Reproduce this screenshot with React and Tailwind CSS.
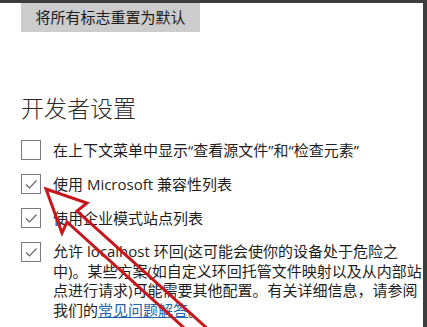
import React from 'react';

const font = { fontFamily: '"Open Sans", "Noto Sans CJK SC", sans-serif' };

function Box({ checked }) {
    return (
        <div className="w-[20px] h-[20px] shrink-0 border-[1.5px] border-[#7a7a7a] bg-white flex items-center justify-center">
            {checked && (
                <svg width="16" height="16" viewBox="0 0 16 16">
                    <polyline points="3,8.5 6.5,12 13.5,4.5" fill="none" stroke="#666666" strokeWidth="1.2" />
                </svg>
            )}
        </div>
    );
}

function Row({ checked, children }) {
    return (
        <div className="flex items-center gap-[12px] h-[20px]">
            <Box checked={checked} />
            <span className="text-[15px] text-[#1e1e1e] whitespace-nowrap">{children}</span>
        </div>
    );
}

export default function App() {
    return (
        <div
            className="relative w-[427px] h-[327px] overflow-hidden bg-white border-t-[3px] border-r-[4px] border-[#3d3d3d]"
            style={font}
        >
            <div className="pl-[21px] flex flex-col">
                <div className="w-[179px] h-[29px] bg-[#cccccc] flex items-center justify-center text-[15px] text-[#1a1a1a]">
                    将所有标志重置为默认
                </div>

                <div className="mt-[60px] h-[32px] leading-[32px] text-[23px] font-light text-[#2a2a2a]">
                    开发者设置
                </div>

                <div className="mt-[16px] flex flex-col gap-[14px]">
                    <Row checked={false}>在上下文菜单中显示“查看源文件”和“检查元素”</Row>
                    <Row checked>使用 Microsoft 兼容性列表</Row>
                    <Row checked>使用企业模式站点列表</Row>
                    <div className="flex items-start gap-[12px]">
                        <Box checked />
                        <div className="text-[15px] leading-[19.5px] text-[#1e1e1e] whitespace-nowrap">
                            <div>允许 localhost 环回(这可能会使你的设备处于危险之</div>
                            <div>中)。某些方案(如自定义环回托管文件映射以及从内部站</div>
                            <div>点进行请求)可能需要其他配置。有关详细信息，请参阅</div>
                            <div>
                                我们的<span className="text-[#2163a8] underline">常见问题解答</span>。
                            </div>
                        </div>
                    </div>
                </div>
            </div>

            {/* red annotation arrow */}
            <svg className="absolute left-0 top-[-3px] pointer-events-none" width="427" height="330" viewBox="0 0 427 330">
                <polygon
                    points="46,189 87,203 77,211 220,340 203,345 67,222 62,233"
                    fill="none"
                    stroke="#c8161d"
                    strokeWidth="3"
                    strokeLinejoin="miter"
                />
            </svg>
        </div>
    );
}
